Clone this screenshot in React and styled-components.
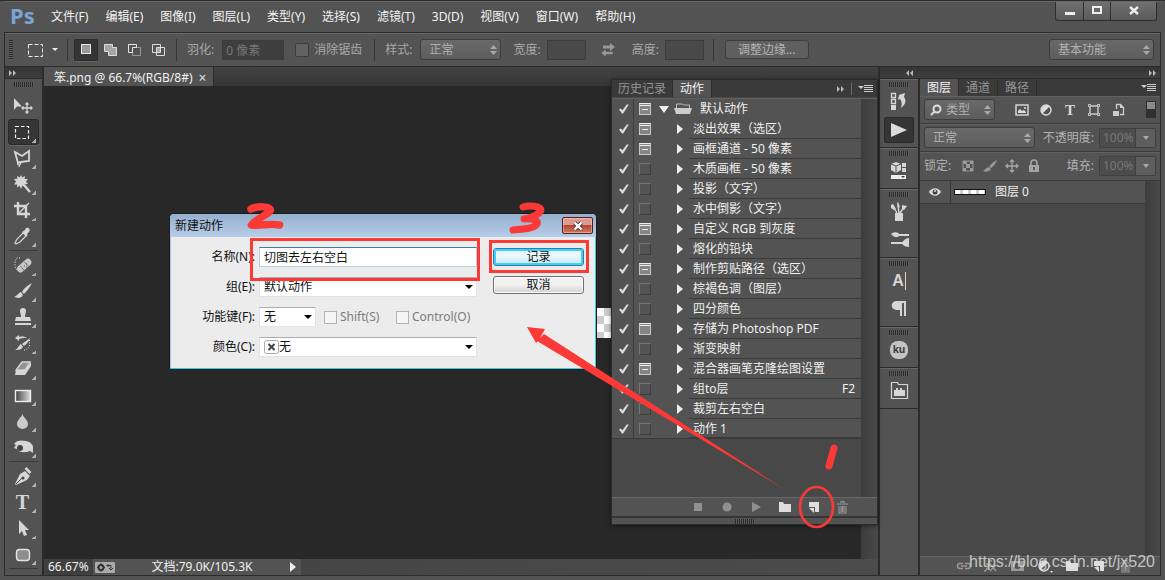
import React from 'react'
import styled, { createGlobalStyle } from 'styled-components'

const GlobalStyle = createGlobalStyle`
    * { box-sizing: border-box; }
    body {
        margin: 0;
        background: #535353;
        font-family: "Noto Sans", "Noto Sans CJK SC", sans-serif;
        font-size: 12px;
        line-height: 18px;
        color: #f0f0f0;
    }
    button, input, select { font: inherit; color: inherit; margin: 0; padding: 0; border: 0; background: none; border-radius: 0; }
    svg { display: block; flex: none; }
`

/* ---------- data ---------- */

const menus = ['文件(F)', '编辑(E)', '图像(I)', '图层(L)', '类型(Y)', '选择(S)', '滤镜(T)', '3D(D)', '视图(V)', '窗口(W)', '帮助(H)']

const actions = [
    { name: '淡出效果（选区）', mode: 'dash' },
    { name: '画框通道 - 50 像素', mode: 'dash' },
    { name: '木质画框 - 50 像素' },
    { name: '投影（文字）' },
    { name: '水中倒影（文字）' },
    { name: '自定义 RGB 到灰度', mode: 'dash' },
    { name: '熔化的铅块' },
    { name: '制作剪贴路径（选区）', mode: 'dash' },
    { name: '棕褐色调（图层）' },
    { name: '四分颜色' },
    { name: '存储为 Photoshop PDF', mode: 'full' },
    { name: '渐变映射' },
    { name: '混合器画笔克隆绘图设置', mode: 'dash' },
    { name: '组to层', shortcut: 'F2' },
    { name: '裁剪左右空白' },
    { name: '动作 1' },
]

/* ---------- icons ---------- */

const Icon = ({ w = 24, h = 24, children }) => (
    <svg width={w} height={h} viewBox={`0 0 ${w} ${h}`} fill="none" stroke="none" aria-hidden="true">{children}</svg>
)

const c = '#d6d6d6'

const toolIcons = {
    move: <><path d="M3 4v12l3-3.500h5z" fill={c} /><path d="M16 9v10M11 14h10M14.500 10.500L16 9l1.500 1.500M14.500 17.500L16 19l1.500-1.500M12.500 12.500L11 14l1.500 1.500M19.500 12.500L21 14l-1.500 1.500" stroke={c} strokeWidth="1.300" /></>,
    marquee: <rect x="4.500" y="6.500" width="13" height="12" stroke="#eee" strokeWidth="1.200" strokeDasharray="3.500 2" />,
    lasso: <><path d="M4 6l7 4 7-5v10l-8 1-3 1z" stroke={c} strokeWidth="1.800" /><path d="M8 16a1.500 1.500 0 1 0 .1 0M9 18l-1 3" stroke={c} strokeWidth="1.200" /></>,
    wand: <><path d="M10 3l1.200 2.600L14 4l-.4 3L17 7l-2 2.500 2 2.500-3.400.2L14 15l-2.600-1.400L10 17l-1.400-3.200L6 15.500l.2-3L3 12.500l2-2.800L3 7l3.300-.2L6 4l2.700 1.600z" fill={c} /><path d="M13 13l6 7" stroke={c} strokeWidth="2.400" /></>,
    crop: <><path d="M7 4v12h12M3 8h12v12" stroke={c} strokeWidth="2.400" /><path d="M8 15L18 5" stroke={c} strokeWidth="1.200" /></>,
    dropper: <><path d="M13 8l3 3-7 7-4 2-1-1 2-4z" stroke={c} strokeWidth="1.200" /><path d="M11 8l3-2 1-2c2-1 5 1 3 4l-2 2-1 3z" fill={c} /></>,
    heal: <><path d="M9 5H6L4 8v6l2 3" stroke="#eee" strokeDasharray="1 1.500" /><rect x="5" y="9" width="17" height="7" rx="3.500" transform="rotate(-42 13.500 13)" fill="#c6c6c6" /><path d="M9.500 13l4 5M13.500 9l4.500 5" stroke="#777" /><path d="M13 13h1m1 1h1m-1-3h1" stroke="#555" /></>,
    brush: <><path d="M21 4c-4 2-8 5-10 9l2 2C16 12 19 8 21 4z" fill={c} /><path d="M10 13l2 3c-2 4-6 3-9 2 3-1 4-4 7-5z" fill={c} /></>,
    stamp: <><path d="M12 3a3 3 0 0 1 3 3c0 2-1 3-1 6h5l1 4H4l1-4h5c0-3-1-4-1-6a3 3 0 0 1 3-3z" fill={c} /><path d="M4 19h16" stroke={c} strokeWidth="2" /></>,
    history: <><path d="M4 7l4-3v2c4-1 6 0 8 1-4 0-5 0-8 1v2z" fill={c} /><path d="M19 7l-8 6 2 2c3-2 5-5 6-8zM10 13l2 3c-2 3-5 3-8 3 3-1 3-4 6-6z" fill={c} /><path d="M18.500 9v7l-4 3h-3" stroke="#ddd" strokeDasharray="1 1.500" /></>,
    eraser: <><path d="M11 5h8l-5 8H5z" stroke={c} fill="#919191" strokeWidth="1.300" /><path d="M5 13h9l6-8v4l-6 9H4z" fill={c} /></>,
    gradient: <><defs><linearGradient id="grad"><stop stopColor="#444" /><stop offset="1" stopColor="#ddd" /></linearGradient></defs><rect x="4.500" y="7.500" width="15" height="11" fill="url(#grad)" stroke="#eee" strokeWidth="1.400" /></>,
    blur: <path d="M11.500 5c1 4 5.500 6 5.500 10a5.500 5 0 0 1-11 0c0-4 4-6 5.500-10z" fill="#ccc" />,
    sponge: <><path d="M3 9c2-4 8-4 12-3 5 1 7 4 7 6v6l-3-2c-5 2-11 2-13-2l-3-1 2-3z" fill={c} /><circle cx="9" cy="13" r="3" fill="#444" /></>,
    pen: <><path d="M14 7l5 5-3 4-11 5-1-1L9 10z" fill={c} /><path d="M5 20l6-6" stroke="#444" /><circle cx="12" cy="14" r="1.500" fill="#444" /><path d="M14.500 4l5 5" stroke={c} strokeWidth="2.600" /></>,
    path: <path d="M8 4v14l3-3 2 5 3-1-2-5h4z" fill={c} />,
    shape: <rect x="5.500" y="7.500" width="13" height="11" rx="3" fill="#8d8d8d" stroke="#e3e3e3" strokeWidth="1.400" />,
}

const toolGroups = [
    [['move', '移动'], ['marquee', '矩形选框'], ['lasso', '套索'], ['wand', '魔棒'], ['crop', '裁剪'], ['dropper', '吸管']],
    [['heal', '修复画笔'], ['brush', '画笔'], ['stamp', '图章'], ['history', '历史记录画笔'], ['eraser', '橡皮擦'], ['gradient', '渐变'], ['blur', '模糊'], ['sponge', '海绵']],
    [['pen', '钢笔'], ['type', '文字'], ['path', '路径选择'], ['shape', '圆角矩形']],
]

const dockIcons = {
    history: <><path d="M4.500 3.500h4v4h-4zM4.500 9.500h4v4h-4z" stroke={c} strokeWidth="1.300" /><path d="M4 15h5v5H4z" fill={c} /><path d="M12 5l6-2-1 4c3 4 1 8-3 11 1-4 1-7-1-9l-2 1z" fill={c} /></>,
    play: <path d="M4 5l16 7-16 7z" fill="#dcdcdc" />,
    three: <><path d="M9 3l5 2v6l-5 3-5-3V5z" fill={c} /><path d="M4 5l5 2 5-2M9 7v7" stroke="#555" /><path d="M15 4h4v4h-4zM15 9h4v4h-4z" fill={c} /><path d="M4 16h15v4H4z" fill="#eee" /><path d="M14 17h4l-2 2z" fill="#444" /></>,
    presets: <><path d="M8 13h8v8H8z" fill={c} /><path d="M10 13L6 6M12 13l-1-8M13 13l4-6" stroke={c} strokeWidth="1.400" /><path d="M4 5l2-1 3 5-2 1-3-2zM10 3l1-1 2 5-2 1zM15 5l5 1-3 4-2-1z" fill={c} /></>,
    brushes: <><path d="M12 7h10M4 15h12" stroke={c} strokeWidth="2" /><path d="M4 6c3-3 8-2 9 1-2 3-6 3-9-1zM22 10c-4 0-5 3-8 5 3 3 5 4 8 4z" fill={c} /></>,
    char: null,
    para: <path d="M9 4h10v15h-2V6h-2v13h-2v-6H9.500a4.500 4.500 0 0 1-.5-9z" fill={c} />,
    ku: null,
    library: <><path d="M4.500 19.500v-16h6l1 2h9v14z" stroke={c} strokeWidth="1.200" /><path d="M7 17v-6h2v-2h2v2h2V9h2v2h3v6z" fill={c} /></>,
}

const dockGroups = [['history', 'play'], ['three'], ['presets', 'brushes'], ['char', 'para'], ['ku'], ['library']]

const UpDown = () => (
    <Icon w={9} h={12}><path d="M4.500 1L8 5H1zM4.500 11L8 7H1z" fill="#a8a8a8" /></Icon>
)
const FlyoutIcon = () => (
    <Icon w={16} h={12}><path d="M0 3h6L3 6z" fill="#ccc" /><path d="M6 2.500h9M6 4.500h9M6 6.500h9M6 8.500h9" stroke="#ccc" strokeWidth="1" /></Icon>
)
const Chevrons = ({ left }) => (
    <Icon w={10} h={8}>
        {left ? <path d="M4 1v6L1 4zM8 1v6L5 4z" fill="#bbb" /> : <path d="M1 1v6l3-3zM5 1v6l3-3z" fill="#bbb" />}
    </Icon>
)
const FolderIcon = () => (
    <Icon w={18} h={14}><path d="M3 2h4l1 2h7v8H3z" fill="#ddd" /></Icon>
)
const NewIcon = () => (
    <Icon w={14} h={14}><path d="M2 2h10v10H8V7H2z" fill="#ddd" /><path d="M2 8h5v5z" fill="#ddd" /></Icon>
)
const TrashIcon = () => (
    <Icon w={14} h={14}><path d="M1 4h11M5 3V1.500h3V3M3 6v7h7V6M5 6v6M6.500 6v6M8 6v6" stroke="#999" strokeWidth="1.100" /></Icon>
)

/* ---------- frame ---------- */

const Window = styled.div`
    display: flex;
    flex-direction: column;
    height: 100vh;
    padding: 0 4px 4px;
    background: #535353;
    border-top: 1px solid #2c2c2c;
    overflow: hidden;
`

const MenuBar = styled.header`
    display: flex;
    align-items: flex-start;
    height: 31px;
    flex: none;
    border-top: 1px solid #666;
`

const Brand = styled.div`
    width: 39px;
    padding-left: 6px;
    font: bold 22px/26px "Noto Sans", sans-serif;
    color: #78a5d6;
`

const MenuNav = styled.nav`
    display: flex;
    gap: 17px;
    padding: 6px 8px;
    flex: 1;
    a { color: #f4f4f4; text-decoration: none; white-space: nowrap; }
`

const WindowButtons = styled.div`
    display: flex;
    margin-right: 4px;
    border: 1px solid #2e2e2e;
    border-top: 0;
    border-radius: 0 0 3px 3px;
    background: linear-gradient(#707070, #5a5a5a);
`

const WindowButton = styled.button`
    display: grid;
    place-items: center;
    width: ${({ $wide }) => ($wide ? '46px' : '27px')};
    height: 18px;
    & + & { border-left: 1px solid #2e2e2e; }
`

const OptionsBar = styled.div`
    display: flex;
    align-items: center;
    height: 35px;
    flex: none;
    padding: 0 6px 0 4px;
    border: 1px solid #2c2c2c;
    box-shadow: inset 0 1px #686868;
    color: #a9a9a9;
    white-space: nowrap;
`

const Grip = styled.div`
    width: ${({ $vertical }) => ($vertical ? '4px' : '20px')};
    height: ${({ $vertical }) => ($vertical ? '20px' : '5px')};
    background: repeating-linear-gradient(${({ $vertical }) => ($vertical ? '180deg' : '90deg')}, #2a2a2a 0 1px, #5c5c5c 1px 2px);
`

const Divider = styled.span`
    width: 1px;
    height: ${({ $short }) => ($short ? '12px' : '22px')};
    margin: 0 ${({ $right = 10 }) => $right}px 0 ${({ $left = 10 }) => $left}px;
    background: ${({ $short }) => ($short ? '#6a6a6a' : '#363636')};
`

const IconButton = styled.button`
    display: grid;
    place-items: center;
    width: 24px;
    height: 22px;
    border-radius: 2px;
    ${({ $on }) => $on && 'background: #353535; box-shadow: inset 0 0 0 1px #2c2c2c, 0 1px #656565;'}
`

const MarqueeButton = styled(IconButton)`
    display: flex;
    align-items: center;
    width: 46px;
    margin-left: 4px;
    gap: 6px;
`

const SwapButton = styled(IconButton)`
    margin: 0 12px 0 10px;
`

const Field = styled.label`
    display: flex;
    align-items: center;
    gap: ${({ $inner = 8 }) => $inner}px;
    margin-left: ${({ $gap = 0 }) => $gap}px;
`

const DarkInput = styled.input`
    width: ${({ $w }) => $w}px;
    height: 20px;
    padding: 0 3px;
    border: 1px solid #3c3c3c;
    background: ${({ $deep }) => ($deep ? '#3e3e3e' : '#494949')};
    color: #777;
`

const DarkTick = styled.input.attrs({ type: 'checkbox' })`
    appearance: none;
    width: 14px;
    height: 14px;
    border: 1px solid #3d3d3d;
    border-radius: 2px;
    background: #626262;
`

const SelectShell = styled.span`
    display: inline-grid;
    align-items: center;
    width: ${({ $w }) => ($w ? `${$w}px` : 'auto')};
    > * { grid-area: 1 / 1; }
    > svg { justify-self: end; margin-right: 3px; pointer-events: none; }
    > svg.lead { justify-self: start; margin-left: 5px; }
`

const DarkSelect = styled.select`
    appearance: none;
    width: 100%;
    height: 21px;
    padding: 0 16px 0 ${({ $indent = 8 }) => $indent}px;
    border: 1px solid #3d3d3d;
    border-radius: 3px;
    background: linear-gradient(#696969, #5d5d5d);
    color: #b0b0b0;
`

const Push = styled.span`
    flex: 1;
`

const DarkButton = styled.button`
    height: 19px;
    padding: 0 12px;
    border: 1px solid #3d3d3d;
    border-radius: 3px;
    background: #5f5f5f;
    color: #b4b4b4;
`

/* ---------- workspace ---------- */

const Workspace = styled.div`
    display: flex;
    flex: 1;
    min-height: 0;
    gap: 2px;
    background: #2b2b2b;
    border: 1px solid #2c2c2c;
    border-top: 0;
`

const Column = styled.div`
    display: flex;
    flex-direction: column;
    min-height: 0;
    overflow: hidden;
`

const ColumnHead = styled.div`
    display: flex;
    align-items: center;
    height: 12px;
    flex: none;
    padding: 0 3px;
    background: linear-gradient(#343434, #3f3f3f);
    border-bottom: 1px solid #2b2b2b;
`

const ToolStrip = styled(Column)`
    width: 37px;
    flex: none;
    background: #535353;
    > ${Grip} { margin: 3px 0 6px 9px; flex: none; }
`

const ToolRule = styled.hr`
    width: 29px;
    height: 1px;
    margin: 1px 4px;
    flex: none;
    border: 0;
    background: #3a3a3a;
`

const ToolButton = styled.button`
    display: flex;
    align-items: center;
    justify-content: center;
    width: 31px;
    height: 26px;
    padding-right: 2px;
    margin-left: 3px;
    flex: none;
    border-radius: 3px;
    ${({ $on }) => $on && 'background-color: #363636; box-shadow: inset 0 0 0 1px #2a2a2a, 0 1px #666;'}
    background-image: ${({ $plain }) => ($plain ? 'none' : 'linear-gradient(135deg, transparent 50%, #b0b0b0 50%)')};
    background-size: 4px 4px;
    background-position: right 3px bottom 2px;
    background-repeat: no-repeat;
`

const SerifT = styled.span`
    font: bold ${({ $size = 20 }) => $size}px/22px "Liberation Serif", serif;
    color: #d6d6d6;
`

const DocArea = styled(Column)`
    flex: 1;
    min-width: 0;
`

const DocTabs = styled.div`
    display: flex;
    height: 19px;
    flex: none;
    background: linear-gradient(#424242, #363636);
`

const DocTab = styled.div`
    display: flex;
    align-items: center;
    gap: 6px;
    padding: 2px 6px 0 10px;
    background: #535353;
    border-right: 1px solid #2b2b2b;
    button { line-height: 12px; font-size: 14px; color: #ddd; }
`

const DocBody = styled.div`
    display: flex;
    flex: 1;
    min-height: 0;
`

const Canvas = styled.main`
    display: grid;
    place-items: center;
    flex: 1;
    background: #282828;
`

const Artboard = styled.div`
    width: 400px;
    height: 30px;
    background: repeating-conic-gradient(#ccc 0 25%, #fff 0 50%) 7px 0 / 16px 16px;
`

const ScrollTrack = styled.div`
    width: ${({ $w = 17 }) => $w}px;
    flex: none;
    background: linear-gradient(90deg, #3d3d3d, #484848);
`

const StatusBar = styled.footer`
    display: flex;
    height: 16px;
    line-height: 16px;
    flex: none;
    background: linear-gradient(90deg, #424242, #4b4b4b);
    output { width: 49px; padding-left: 4px; background: #3f3f3f; }
`

const StatusInfo = styled.div`
    display: flex;
    align-items: center;
    justify-content: space-between;
    width: 208px;
    padding: 0 2px;
    background: #535353;
`

const SidePanels = styled(Column)`
    width: 280px;
    flex: none;
`

const SideHead = styled(ColumnHead)`
    padding: 0 2px 0 25px;
`

const SideBody = styled.div`
    display: flex;
    flex: 1;
    min-height: 0;
    gap: 2px;
`

const Dock = styled.aside`
    width: 38px;
    flex: none;
    background: #535353;
`

const DockGroup = styled.section`
    display: flex;
    flex-direction: column;
    align-items: center;
    padding: 2px 0 3px;
    border-top: 1px solid #676767;
    border-bottom: 1px solid #2b2b2b;
    ${Grip} { margin-bottom: 1px; }
`

const DockButton = styled.button`
    display: grid;
    place-items: center;
    width: 30px;
    height: 26px;
    margin: 1px 0;
    border-radius: 3px;
    ${({ $on }) => $on && 'background: #353535; box-shadow: inset 0 0 0 1px #2a2a2a;'}
`

const CharGlyph = styled.span`
    padding-right: 1px;
    border-right: 1px solid #d6d6d6;
    font: bold 16px/18px "Liberation Sans", sans-serif;
    color: #d6d6d6;
`

const KuBadge = styled.span`
    width: 18px;
    height: 18px;
    border-radius: 8px;
    background: #c4c4c4;
    color: #3c3c3c;
    font: bold 10px/17px "Noto Sans", sans-serif;
    text-align: center;
`

const Panel = styled.section`
    display: flex;
    flex-direction: column;
    flex: 1;
    min-width: 0;
    background: #484848;
`

const TabRow = styled.div`
    display: flex;
    align-items: center;
    height: 17px;
    flex: none;
    padding-right: 3px;
    background: #3a3a3a;
`

const Tab = styled.button`
    height: 17px;
    padding: 0 ${({ $pad = 7 }) => $pad}px;
    line-height: 17px;
    border-right: 1px solid #2c2c2c;
    background: ${({ $on }) => ($on ? '#535353' : 'transparent')};
    color: ${({ $on }) => ($on ? '#f5f5f5' : '#959595')};
`

const LayerRow = styled.div`
    display: flex;
    align-items: center;
    height: ${({ $h = 28 }) => $h}px;
    flex: none;
    padding: 0 4px;
    background: #535353;
    border-bottom: 1px solid #3a3a3a;
    box-shadow: inset 0 1px #616161;
    color: #b2b2b2;
    white-space: nowrap;
`

const FilterIcons = styled.div`
    display: flex;
    flex: 1;
    padding-left: 15px;
`

const FilterSwitch = styled.button`
    width: 10px;
    height: 17px;
    border: 1px solid #303030;
    background: linear-gradient(#8b8b8b 7px, #303030 7px);
`

const Percent = styled.span`
    display: flex;
    border: 1px solid #3f3f3f;
    border-radius: 2px;
    input { width: 35px; height: 18px; padding-left: 3px; background: #4c4c4c; color: #777; }
    button { display: grid; place-items: center; width: 20px; border-left: 1px solid #3f3f3f; background: #5d5d5d; }
`

const LockIcons = styled.div`
    display: flex;
    margin-left: 6px;
    button { width: 22px; }
`

const LayerList = styled.div`
    display: flex;
    flex: 1;
    min-height: 0;
`

const LayerItem = styled.div`
    display: flex;
    align-items: center;
    flex: 1;
    height: 23px;
    background: #535353;
    border-bottom: 1px solid #3a3a3a;
    > button { display: grid; place-items: center; width: 31px; height: 22px; border-right: 1px solid #3a3a3a; }
`

const LayerThumb = styled.span`
    width: 32px;
    height: 6px;
    margin: 0 9px 0 3px;
    border: 1px solid #111;
    background: repeating-linear-gradient(90deg, #fff 0 5px, #ccc 5px 8px);
`

const PanelFoot = styled.footer`
    display: flex;
    align-items: center;
    justify-content: flex-end;
    height: 19px;
    flex: none;
    padding-right: ${({ $right = 23 }) => $right}px;
    gap: ${({ $gap = 6 }) => $gap}px;
    background: #535353;
    border-top: 1px solid #686868;
    button { display: grid; place-items: center; width: 22px; height: 18px; }
`

const Watermark = styled.div`
    position: absolute;
    right: 10px;
    bottom: 8px;
    font: 16px/20px "Liberation Sans", sans-serif;
    color: rgba(225, 225, 225, .8);
`

/* ---------- floating actions panel ---------- */

const FloatingPanel = styled.section`
    position: absolute;
    top: 79px;
    right: 287px;
    width: 267px;
    border: 1px solid #2b2b2b;
    background: #484848;
    box-shadow: 0 1px 4px rgba(0, 0, 0, .5);
`

const ActionBody = styled.div`
    display: flex;
    margin-top: 1px;
    border-top: 1px solid #606060;
`

const ActionList = styled.ul`
    flex: 1;
    min-height: 398px;
    margin: 0;
    padding: 0;
    list-style: none;
`

const ActionRow = styled.li`
    display: flex;
    height: 20px;
    background: #535353;
    &:last-child { border-bottom: 1px solid #3a3a3a; }
`

const ActionTick = styled.input.attrs({ type: 'checkbox' })`
    appearance: none;
    width: 22px;
    height: 20px;
    padding: 5px 4px 4px 7px;
    border-right: 1px solid #3a3a3a;
    &:checked::before {
        content: "";
        display: block;
        width: 10px;
        height: 10px;
        background: #dcdcdc;
        clip-path: polygon(0 55%, 18% 45%, 35% 62%, 78% 5%, 98% 5%, 42% 96%, 30% 96%);
    }
`

const ModeBox = styled.button`
    display: grid;
    place-items: center;
    width: 12px;
    height: 12px;
    margin: 4px 8px 0 5px;
    border: 1px solid ${({ $filled }) => ($filled ? '#c8c8c8' : '#3d3d3d')};
    background: ${({ $filled }) => ($filled ? '#858585' : 'transparent')};
    border-top-color: ${({ $filled }) => ($filled ? '#eee' : '#757575')};
    ${({ $filled }) => !$filled && 'border-left-color: #757575;'}
`

const ActionName = styled.div`
    display: flex;
    justify-content: space-between;
    flex: 1;
    padding: 0 6px 0 ${({ $group }) => ($group ? '8px' : '4px')};
    line-height: 19px;
    white-space: pre;
    ${({ $group }) => !$group && 'border-bottom: 1px solid #3a3a3a;'}
`

const Expander = styled.button`
    display: grid;
    place-items: center;
    width: ${({ $group }) => ($group ? '14px' : '30px')};
    height: 20px;
    padding: ${({ $group }) => ($group ? '0 4px 0 0' : '0 0 0 12px')};
`

const GripFoot = styled.div`
    display: grid;
    place-items: center;
    height: 8px;
    background: #535353;
    border-top: 2px solid #353535;
`

/* ---------- dialog ---------- */

const Dialog = styled.form`
    position: absolute;
    left: 169px;
    top: 213px;
    width: 428px;
    border: 1px solid #1c1c1c;
    border-radius: 5px 5px 0 0;
    background: #ececec;
    box-shadow: inset -1px -1px #2ccfe8, inset 1px 0 #a9c5e3;
    color: #111;
`

const DialogTitle = styled.div`
    display: flex;
    align-items: center;
    justify-content: space-between;
    height: 23px;
    padding: 0 3px 0 5px;
    border-radius: 4px 4px 0 0;
    background: linear-gradient(#94afcd, #b6cde8);
`

const CloseButton = styled.button`
    display: grid;
    place-items: center;
    width: 31px;
    height: 17px;
    border: 1px solid #5b1a1a;
    border-radius: 2px;
    background: linear-gradient(#dd9a90 45%, #b6462f 50%, #cf7a62);
    box-shadow: inset 0 0 0 1px rgba(255, 255, 255, .35);
`

const DialogBody = styled.div`
    display: flex;
    gap: 16px;
    padding: 10px 12px 12px 1px;
`

const DialogFields = styled.div`
    display: grid;
    grid-template-columns: 84px 1fr;
    row-gap: 10px;
    column-gap: 4px;
    flex: 1;
    align-items: center;
    > label { text-align: right; line-height: 20px; white-space: nowrap; }
`

const LightInput = styled.input`
    width: 100%;
    height: 20px;
    padding: 0 4px;
    background: #fff;
    border: 1px solid #b5cfe7;
    border-top-color: #3d7bad;
`

const LightSelect = styled.select`
    appearance: none;
    width: 100%;
    height: 20px;
    padding: 0 16px 0 ${({ $indent = 4 }) => $indent}px;
    background: #fff;
    border: 1px solid #e0e3ea;
    border-top-color: #abadb3;
    color: #111;
`

const KeyRow = styled.div`
    display: flex;
    align-items: center;
    gap: 8px;
`

const LightTick = styled.label`
    display: flex;
    align-items: center;
    gap: 3px;
    width: 64px;
    color: #7d7d7d;
    input { appearance: none; width: 13px; height: 13px; flex: none; border: 1px solid #b3b3b3; background: #f5f5f5; }
`

const DialogButtons = styled.div`
    display: flex;
    flex-direction: column;
    gap: 10px;
    padding-top: 1px;
`

const LightButton = styled.button`
    width: 91px;
    height: 18px;
    line-height: 16px;
    border: 1px solid ${({ $primary }) => ($primary ? '#2f7fa5' : '#707070')};
    border-radius: 3px;
    background: ${({ $primary }) => ($primary ? 'linear-gradient(#eaf6fc 45%, #c4e5f6)' : 'linear-gradient(#f2f2f2 48%, #d2d2d2)')};
    box-shadow: inset 0 0 0 ${({ $primary }) => ($primary ? '2px #3fd0f5' : '1px #fafafa')};
`

const Marks = styled.svg`
    position: absolute;
    left: 0;
    top: 0;
    pointer-events: none;
`

/* ---------- parts ---------- */

const Options = () => (
    <OptionsBar>
        <Grip $vertical />
        <MarqueeButton aria-label="矩形选框">
            <Icon w={28} h={20}><rect x="11.500" y="4.500" width="14" height="12" stroke="#eee" strokeDasharray="4 2" /></Icon>
            <Icon w={8} h={6}><path d="M1 1h6L4 4z" fill="#eee" /></Icon>
        </MarqueeButton>
        <Divider $left={4} $right={6} />
        <IconButton $on aria-label="新选区"><Icon w={16} h={16}><rect x="3.500" y="2.500" width="9" height="9" fill="#9a9a9a" stroke="#e6e6e6" /></Icon></IconButton>
        <IconButton aria-label="添加到选区"><Icon w={16} h={16}><path d="M2.500 2.500h8v3h4v8h-8v-4h-4z" fill="#a5a5a5" stroke="#ddd" /></Icon></IconButton>
        <IconButton aria-label="从选区减去"><Icon w={16} h={16}><path d="M6.500 5.500h8v8h-8z" stroke="#999" /><path d="M6.500 10.500h-4v-8h8v3h-4z" stroke="#e6e6e6" /></Icon></IconButton>
        <IconButton aria-label="与选区交叉"><Icon w={16} h={16}><path d="M2.500 2.500h8v8h-8zM6.500 5.500h8v8h-8z" stroke="#ddd" /><path d="M7 6h3v4H7z" fill="#aaa" /></Icon></IconButton>
        <Divider $left={6} />
        <Field>羽化: <DarkInput $w={62} $deep defaultValue="0 像素" /></Field>
        <Field $gap={11} $inner={5}><DarkTick />消除锯齿</Field>
        <Divider $left={12} />
        <Field>样式: <SelectShell $w={81}><DarkSelect><option>正常</option></DarkSelect><UpDown /></SelectShell></Field>
        <Field $gap={12} $inner={6}>宽度: <DarkInput $w={39} /></Field>
        <SwapButton aria-label="互换"><Icon w={16} h={16}><path d="M3 3.500h7V1l5 4-5 4V6.500H3z" fill="#999" /><path d="M13 9.500H6V7l-5 4 5 4v-2.500h7z" fill="#999" stroke="#535353" strokeWidth="0.600" /></Icon></SwapButton>
        <Field $inner={6}>高度: <DarkInput $w={39} /></Field>
        <Divider $left={9} $right={11} />
        <DarkButton>调整边缘...</DarkButton>
        <Push />
        <SelectShell $w={105}><DarkSelect aria-label="工作区"><option>基本功能</option></DarkSelect><UpDown /></SelectShell>
    </OptionsBar>
)

const Tools = () => (
    <ToolStrip as="aside">
        <ColumnHead><Chevrons /></ColumnHead>
        <Grip />
        {toolGroups.map((group, i) => (
            <React.Fragment key={i}>
                {group.map(([id, label]) => (
                    <ToolButton key={id} $on={id === 'marquee'} $plain={id === 'move'} aria-label={label}>
                        {id === 'type' ? <SerifT>T</SerifT> : <Icon>{toolIcons[id]}</Icon>}
                    </ToolButton>
                ))}
                <ToolRule />
            </React.Fragment>
        ))}
    </ToolStrip>
)

const PercentBox = ({ label }) => (
    <Percent>
        <input aria-label={label} defaultValue="100%" />
        <button aria-label={`${label}滑块`}><Icon w={8} h={6}><path d="M1 1h6L4 5z" fill="#aaa" /></Icon></button>
    </Percent>
)

const LayersPanel = () => (
    <Panel>
        <TabRow>
            <Tab $on>图层</Tab><Tab>通道</Tab><Tab>路径</Tab>
            <Push />
            <FlyoutIcon />
        </TabRow>
        <LayerRow>
            <SelectShell $w={71}>
                <DarkSelect $indent={21} aria-label="筛选"><option>类型</option></DarkSelect>
                <svg className="lead" width="14" height="14" viewBox="0 0 14 14" fill="none"><circle cx="8" cy="6" r="3.500" stroke="#ddd" strokeWidth="2" /><path d="M5.500 8.500L2 12" stroke="#ddd" strokeWidth="2" /></svg>
                <UpDown />
            </SelectShell>
            <FilterIcons>
                <IconButton aria-label="像素"><Icon w={16} h={14}><rect x="2" y="2" width="12" height="10" stroke="#ddd" strokeWidth="1.400" /><path d="M4 10V8l2-2 2 2 2-1 2 2v1z" fill="#ddd" /><circle cx="11" cy="5" r="1" fill="#ddd" /></Icon></IconButton>
                <IconButton aria-label="调整"><Icon w={14} h={14}><circle cx="7" cy="7" r="5" stroke="#ddd" strokeWidth="1.400" /><path d="M3.500 10.500a5 5 0 0 1 7-7z" fill="#ddd" /></Icon></IconButton>
                <IconButton aria-label="文字"><SerifT $size={15}>T</SerifT></IconButton>
                <IconButton aria-label="形状"><Icon w={14} h={14}><path d="M3 4v6M11 4v6M4 3h6M4 11h6" stroke="#ccc" strokeWidth="1.400" /><path d="M1.500 1.500h2v2h-2zM10.500 1.500h2v2h-2zM1.500 10.500h2v2h-2zM10.500 10.500h2v2h-2z" stroke="#ccc" /></Icon></IconButton>
                <IconButton aria-label="智能对象"><Icon w={14} h={14}><path d="M5.500 6V1.500h4l3 3v7H9" stroke="#ccc" strokeWidth="1.300" /><path d="M9 1v4h4M2 8h6v5H2z" fill="#ccc" /></Icon></IconButton>
            </FilterIcons>
            <FilterSwitch aria-label="筛选开关" />
        </LayerRow>
        <LayerRow>
            <SelectShell $w={111}><DarkSelect aria-label="混合模式"><option>正常</option></DarkSelect><UpDown /></SelectShell>
            <Push />
            <Field $inner={5}>不透明度: <PercentBox label="不透明度" /></Field>
        </LayerRow>
        <LayerRow $h={29}>
            锁定:
            <LockIcons>
                <IconButton aria-label="透明像素"><Icon w={14} h={14}><path d="M2 2h10v10H2z" stroke="#999" /><path d="M2 2h4v3H2zM9 2h3v3H9zM5 5h4v4H5zM2 9h3v3H2zM9 9h3v3H9z" fill="#999" /></Icon></IconButton>
                <IconButton aria-label="图像像素"><Icon w={16} h={14}><path d="M15 1C11 3 9 5 7 8l2 1c3-2 5-5 6-8zM6 8l3 2c-2 3-5 3-8 2 2-1 3-3 5-4z" fill="#999" /></Icon></IconButton>
                <IconButton aria-label="位置"><Icon w={14} h={14}><path d="M7 1v12M1 7h12M5 3l2-2 2 2M5 11l2 2 2-2M3 5L1 7l2 2M11 5l2 2-2 2" stroke="#a5a5a5" strokeWidth="1.300" /></Icon></IconButton>
                <IconButton aria-label="全部"><Icon w={12} h={14}><path d="M1 6h10v7H1z" fill="#a5a5a5" /><path d="M3 6V4a3 3 0 0 1 6 0v2" stroke="#a5a5a5" strokeWidth="1.600" /><path d="M6 8v3" stroke="#444" strokeWidth="1.500" /></Icon></IconButton>
            </LockIcons>
            <Push />
            <Field $inner={5}>填充: <PercentBox label="填充" /></Field>
        </LayerRow>
        <LayerList>
            <LayerItem>
                <button aria-label="可见性"><Icon w={14} h={10}><path d="M1 5c3-5 9-5 12 0-3 5-9 5-12 0z" fill="#ddd" /><circle cx="7" cy="5" r="2.500" fill="#444" /><circle cx="7" cy="4" r="1" fill="#ddd" /></Icon></button>
                <LayerThumb />
                图层 0
            </LayerItem>
            <ScrollTrack $w={15} />
        </LayerList>
        <PanelFoot $gap={5}>
            <button aria-label="链接"><Icon w={16} h={10}><path d="M7 2.500H4a2.500 2.500 0 0 0 0 5h3M9 2.500h3a2.500 2.500 0 0 1 0 5H9M5 5h6" stroke="#999" strokeWidth="1.500" /></Icon></button>
            <button aria-label="样式"><Icon w={16} h={14}><path d="M9 2C6 1 6 4 5 7s-1 5-4 5M3 5h5M8 6l5 6M13 6l-6 6" stroke="#999" strokeWidth="1.500" /></Icon></button>
            <button aria-label="蒙版"><Icon w={14} h={12}><path d="M0 1h13v10H0z" fill="#999" /><circle cx="6.500" cy="6" r="3" fill="#505050" /></Icon></button>
            <button aria-label="调整图层"><Icon w={16} h={14}><circle cx="7" cy="7" r="5" stroke="#ddd" strokeWidth="1.400" /><path d="M3.500 10.500a5 5 0 0 1 7-7z" fill="#ddd" /><path d="M13 12h3l-1.500 2z" fill="#ddd" /></Icon></button>
            <button aria-label="组"><FolderIcon /></button>
            <button aria-label="新建"><NewIcon /></button>
            <button aria-label="删除"><TrashIcon /></button>
        </PanelFoot>
    </Panel>
)

const ModeMark = ({ mode }) => mode ? (
    <Icon w={10} h={10}><path d="M0 1.500h10" stroke="#eee" />{mode === 'dash' && <path d="M2 5.500h6" stroke="#eee" />}</Icon>
) : null

const ActionsPanel = () => (
    <FloatingPanel>
        <TabRow>
            <Tab $pad={6}>历史记录</Tab><Tab $on>动作</Tab>
            <Push />
            <Chevrons />
            <Divider $short $left={5} $right={6} />
            <FlyoutIcon />
        </TabRow>
        <ActionBody>
            <ActionList>
                <ActionRow>
                    <ActionTick defaultChecked aria-label="默认动作" />
                    <ModeBox $filled aria-label="对话开关"><ModeMark mode="dash" /></ModeBox>
                    <Expander $group aria-label="折叠"><Icon w={10} h={8}><path d="M0 1h10L5 8z" fill="#eee" /></Icon></Expander>
                    <Icon w={19} h={20}><path d="M3.500 9V5h6l1 1h6v3" stroke="#bbb" /><path d="M1 9h18l-2 6H3z" fill="#ccc" /></Icon>
                    <ActionName $group>默认动作</ActionName>
                </ActionRow>
                {actions.map(({ name, mode, shortcut }) => (
                    <ActionRow key={name}>
                        <ActionTick defaultChecked aria-label={name} />
                        <ModeBox $filled={!!mode} aria-label="对话开关"><ModeMark mode={mode} /></ModeBox>
                        <Expander aria-label="展开"><Icon w={8} h={10}><path d="M1 0v10l6-5z" fill="#eee" /></Icon></Expander>
                        <ActionName><span>{name}</span>{shortcut && <span>{shortcut}</span>}</ActionName>
                    </ActionRow>
                ))}
            </ActionList>
            <ScrollTrack $w={16} />
        </ActionBody>
        <PanelFoot $gap={7}>
            <button aria-label="停止"><Icon w={10} h={10}><path d="M1 1h8v8H1z" fill="#909090" /></Icon></button>
            <button aria-label="记录"><Icon w={10} h={10}><circle cx="5" cy="5" r="4.500" fill="#909090" /></Icon></button>
            <button aria-label="播放"><Icon w={10} h={10}><path d="M1 0v10l9-5z" fill="#909090" /></Icon></button>
            <button aria-label="新建组"><FolderIcon /></button>
            <button aria-label="新建动作"><NewIcon /></button>
            <button aria-label="删除动作"><TrashIcon /></button>
        </PanelFoot>
        <GripFoot><Grip /></GripFoot>
    </FloatingPanel>
)

const DropArrow = () => <Icon w={10} h={6}><path d="M1 1h8L5 5z" fill="#000" /></Icon>

const NewActionDialog = () => (
    <Dialog onSubmit={(e) => e.preventDefault()}>
        <DialogTitle>
            新建动作
            <CloseButton type="button" aria-label="关闭"><Icon w={12} h={10}><path d="M2.500 1.500l7 7M9.500 1.500l-7 7" stroke="#444" strokeWidth="4" /><path d="M2.500 1.500l7 7M9.500 1.500l-7 7" stroke="#fff" strokeWidth="2.400" /></Icon></CloseButton>
        </DialogTitle>
        <DialogBody>
            <DialogFields>
                <label htmlFor="name">名称(N):</label>
                <LightInput id="name" defaultValue="切图去左右空白" />
                <label htmlFor="set">组(E):</label>
                <SelectShell><LightSelect id="set"><option>默认动作</option></LightSelect><DropArrow /></SelectShell>
                <label htmlFor="key">功能键(F):</label>
                <KeyRow>
                    <SelectShell $w={57}><LightSelect id="key"><option>无</option></LightSelect><DropArrow /></SelectShell>
                    <LightTick><input type="checkbox" />Shift(S)</LightTick>
                    <LightTick><input type="checkbox" />Control(O)</LightTick>
                </KeyRow>
                <label htmlFor="color">颜色(C):</label>
                <SelectShell>
                    <LightSelect id="color" $indent={19}><option>无</option></LightSelect>
                    <svg className="lead" width="16" height="14" viewBox="3 0 16 14" fill="none"><rect x="3.500" y="0.500" width="14" height="13" rx="2" stroke="#aaa" /><path d="M7.500 4l6 6M13.500 4l-6 6" stroke="#444" strokeWidth="2" /></svg>
                    <DropArrow />
                </SelectShell>
            </DialogFields>
            <DialogButtons>
                <LightButton $primary>记录</LightButton>
                <LightButton type="button">取消</LightButton>
            </DialogButtons>
        </DialogBody>
    </Dialog>
)

const Annotations = () => (
    <Marks width="900" height="560" viewBox="0 0 900 560" fill="none" stroke="#fb3a37" aria-hidden="true">
        <rect x="251.500" y="239.500" width="227" height="40" strokeWidth="3" />
        <rect x="490.500" y="241.500" width="97" height="30" strokeWidth="3" />
        <path d="M251 209C257 206 270 206 270.500 210C270 214 257 218 251.500 225C260 226 271 223 279.500 225" strokeWidth="7.500" strokeLinecap="round" strokeLinejoin="round" />
        <path d="M523 207C529 205 541 206 541 210C541 214 530 218 524 219C532 218 539 220 537 224C534 229 522 229 513 230" strokeWidth="7" strokeLinecap="round" strokeLinejoin="round" />
        <path d="M834 448l-5 18" strokeWidth="7" strokeLinecap="round" />
        <ellipse cx="816.500" cy="507" rx="16.500" ry="20" strokeWidth="2.600" />
        <path d="M784 489L540 338l5-9-18-2 9 16 4-4L784 489z" fill="#fb3a37" stroke="none" />
        <path d="M784 489L537 341l7-7z" fill="#fb3a37" stroke="none" />
    </Marks>
)

const App = () => (
    <>
        <GlobalStyle />
        <Window>
            <MenuBar>
                <Brand>Ps</Brand>
                <MenuNav>{menus.map((m) => <a key={m} href="#menu">{m}</a>)}</MenuNav>
                <WindowButtons>
                    <WindowButton aria-label="最小化"><Icon w={12} h={12}><path d="M1 7h10v3H1z" fill="#eee" /></Icon></WindowButton>
                    <WindowButton aria-label="最大化"><Icon w={12} h={12}><rect x="2" y="2" width="8" height="6" stroke="#eee" strokeWidth="2" /></Icon></WindowButton>
                    <WindowButton $wide aria-label="关闭"><Icon w={12} h={10}><path d="M2 1l8 7M10 1L2 8" stroke="#eee" strokeWidth="2.400" /></Icon></WindowButton>
                </WindowButtons>
            </MenuBar>
            <Options />
            <Workspace>
                <Tools />
                <DocArea>
                    <DocTabs><DocTab>笨.png @ 66.7%(RGB/8#)<button aria-label="关闭文档">×</button></DocTab></DocTabs>
                    <DocBody>
                        <Canvas><Artboard /></Canvas>
                        <ScrollTrack />
                    </DocBody>
                    <StatusBar>
                        <output>66.67%</output>
                        <StatusInfo>
                            <Icon w={20} h={12}><rect width="20" height="11" y="1" rx="1" fill="#aaa" /><circle cx="6" cy="6.500" r="2.500" stroke="#333" strokeWidth="2" /><path d="M6 2v2M6 9v2M2 6.500h2M8 6.500h2M3 4l1 1M9 4L8 5M3 9l1-1M9 9L8 8" stroke="#333" /><path d="M12 4.500h4v3M13.500 3L12 4.500 13.500 6M14 7l2 2 2-2" stroke="#333" /></Icon>
                            <span>文档:79.0K/105.3K</span>
                            <Icon w={10} h={10}><path d="M1 0v10l6-5z" fill="#eee" /></Icon>
                        </StatusInfo>
                    </StatusBar>
                </DocArea>
                <SidePanels>
                    <SideHead><Chevrons left /><Push /><Chevrons /></SideHead>
                    <SideBody>
                        <Dock>
                            {dockGroups.map((group, i) => (
                                <DockGroup key={i}>
                                    <Grip />
                                    {group.map((id) => (
                                        <DockButton key={id} $on={id === 'play'} aria-label={id}>
                                            {id === 'char' ? <CharGlyph>A</CharGlyph> : id === 'ku' ? <KuBadge>ku</KuBadge> : <Icon>{dockIcons[id]}</Icon>}
                                        </DockButton>
                                    ))}
                                </DockGroup>
                            ))}
                        </Dock>
                        <LayersPanel />
                    </SideBody>
                </SidePanels>
            </Workspace>
        </Window>
        <ActionsPanel />
        <NewActionDialog />
        <Watermark>https://blog.csdn.net/jx520</Watermark>
        <Annotations />
    </>
)

export default App
